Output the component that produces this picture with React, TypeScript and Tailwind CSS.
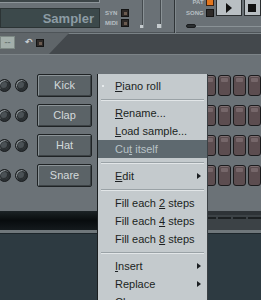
import React from "react";

const channels = ["Kick", "Clap", "Hat", "Snare"];

function Knob() {
  return (
    <div className="w-[13px] h-[13px] rounded-full bg-[#2b3033] border border-[#1a1d1f] shadow-[inset_1px_1px_0_#8a9195] flex items-center justify-center">
      <div className="w-[7px] h-[7px] rounded-full bg-[#4a5155] shadow-[inset_-1px_-1px_0_#2a2e30]" />
    </div>
  );
}

function Step() {
  return (
    <div className="w-[13px] h-[21px] rounded-[3px] bg-[#5c4d50] border border-[#1b1b1d] flex justify-center pt-[2px] shadow-[inset_0_1px_0_#7d6d70]">
      <div className="w-[7px] h-[4px] rounded-[1px] bg-[#76676a]" />
    </div>
  );
}

function Item({
  children,
  active,
  sub,
}: {
  children: React.ReactNode;
  active?: boolean;
  sub?: boolean;
}) {
  return (
    <div
      className={
        "h-[18px] flex items-center pl-[17px] pr-[6px] " +
        (active ? "bg-[#5e696f] text-[#b9c3c7]" : "text-[#1b1f22]")
      }
    >
      <span className="flex-1">{children}</span>
      {sub && (
        <span className="w-0 h-0 border-y-[3.5px] border-y-transparent border-l-[4px] border-l-[#1b1f22]" />
      )}
    </div>
  );
}

function Sep() {
  return (
    <div className="h-[9px] flex items-center px-[3px]">
      <div className="flex-1 h-[2px] border-t border-[#9aa2a6] border-b border-b-[#e2e6e8]" />
    </div>
  );
}

export default function App() {
  return (
    <div className="relative w-[261px] h-[300px] overflow-hidden bg-[#6b7277] font-['Liberation_Sans',sans-serif] flex flex-col">
      {/* TOP PANEL */}
      <div className="h-[33px] flex bg-[#6a7176] border-b border-[#4e5458]">
        <div className="w-[100px] flex flex-col">
          <div className="h-[3px] bg-[#3c4547] border-b border-r border-[#8d9599]" />
          <div className="mt-[5px] h-[20px] bg-[#3c494b] border border-[#2c3435] flex items-center justify-end pr-[5px] text-[#8c9ca4] font-bold text-[13px] leading-none">
            Sampler
          </div>
        </div>
        <div className="ml-[5px] pt-[9px] flex flex-col gap-[2px] text-[6px] font-bold text-[#b7bfc3] leading-none">
          <div className="flex items-center gap-[4px]">
            <span className="w-[12px]">SYN</span>
            <div className="w-[8px] h-[8px] bg-[#2e2a28] border border-[#141414] flex items-center justify-center">
              <div className="w-[3px] h-[3px] bg-[#6b5b50]" />
            </div>
          </div>
          <div className="flex items-center gap-[4px]">
            <span className="w-[12px]">MIDI</span>
            <div className="w-[8px] h-[8px] bg-[#2e2a28] border border-[#141414] flex items-center justify-center">
              <div className="w-[3px] h-[3px] bg-[#6b5b50]" />
            </div>
          </div>
        </div>
        <div className="ml-[13px] w-[2px] h-[28px] bg-[#454b4f] border-r border-[#8a9296] flex items-end">
          <div className="w-[4px] h-[3px] -ml-[2px] bg-[#c5cbce]" />
        </div>
        <div className="ml-[16px] w-[2px] h-[28px] bg-[#454b4f] border-r border-[#8a9296] flex items-end">
          <div className="w-[7px] h-[4px] -ml-[3px] bg-[#c5cbce]" />
        </div>
        <div className="ml-[12px] w-[2px] h-[33px] bg-[#2f3437] border-r border-[#80888c]" />
        <div className="flex-1 flex flex-col pl-[10px]">
          <div className="flex items-start">
            <div className="flex flex-col gap-[3px] text-[6px] font-bold text-[#b7bfc3] leading-none">
              <div className="flex items-center justify-end gap-[2px] -mt-[2px]">
                <span>PAT</span>
                <div className="w-[8px] h-[8px] bg-[#e2761e] border border-[#3a2010]" />
              </div>
              <div className="flex items-center gap-[2px]">
                <span>SONG</span>
                <div className="w-[8px] h-[8px] bg-[#2e2a28] border border-[#141414]" />
              </div>
            </div>
            <div className="ml-[2px] -mt-[1px] w-[26px] h-[17px] bg-[#b9bfc3] border border-[#2a2e30] flex items-center justify-center">
              <div className="w-0 h-0 border-y-[5px] border-y-transparent border-l-[6px] border-l-[#111]" />
            </div>
            <div className="ml-[2px] -mt-[1px] flex-1 h-[17px] bg-[#b9bfc3] border border-[#2a2e30] flex items-center pl-[3px]">
              <div className="w-[8px] h-[8px] bg-[#111]" />
            </div>
          </div>
          <div className="mt-[7px] flex items-center">
            <div className="w-[10px] h-[4px] rounded-[2px] bg-[#2a2e30] border border-[#1a1c1e]" />
            <div className="flex-1 h-[1px] bg-[#3d4246] border-b border-[#8a9296]" />
          </div>
        </div>
      </div>

      {/* TAB BAR */}
      <div className="h-[22px] flex bg-[#5f6569] border-b border-[#7c8387]">
        <div className="mt-[3px] w-[15px] h-[13px] bg-[#a3afab] border border-[#7d8985] flex items-center justify-center text-[#6c7a76] text-[9px] font-bold leading-none">
          --
        </div>
        <div className="ml-[10px] mt-[5px] text-[#c5ccd0] text-[9px] font-bold leading-none">↶</div>
        <div className="ml-[3px] mt-[6px] w-[8px] h-[8px] bg-[#2e2a28] border border-[#141414] flex items-center justify-center">
          <div className="w-[3px] h-[3px] bg-[#6b5b50]" />
        </div>
        <div className="ml-[5px] flex-1 bg-[#43484c] border-t border-[#7a8286] [clip-path:polygon(20px_0,100%_0,100%_100%,0_100%)]" />
      </div>

      {/* CHANNEL RACK */}
      <div className="h-[156px] pt-[19px] flex flex-col gap-[7px]">
        {channels.map((c) => (
          <div key={c} className="h-[23px] flex items-center">
            <div className="-ml-[2px] flex gap-[4px]">
              <Knob />
              <Knob />
            </div>
            <div className="ml-[9px] w-[60px] h-[23px] rounded-[2px] bg-[#5b6367] border border-[#1f2325] shadow-[inset_1px_1px_0_#8b9397,inset_-1px_-1px_0_#3d4346] flex items-center justify-center text-[#d3d9db] text-[11px]">
              {c}
            </div>
            <div className="ml-[111px] flex gap-[2px]">
              <Step />
              <Step />
              <Step />
              <Step />
            </div>
          </div>
        ))}
      </div>

      {/* PLAYLIST STRIP */}
      <div className="h-[19px] flex">
        <div className="w-[208px] bg-gradient-to-b from-[#1c2326] via-[#080c0e] to-[#141a1d]" />
        <div className="flex-1 bg-[#3c4246] border-t-[4px] border-[#2e3337] pt-[2px] flex gap-[2px]">
          <div className="w-[13px] h-[2px] bg-[#1c2022]" />
          <div className="w-[13px] h-[2px] bg-[#1c2022]" />
          <div className="w-[13px] h-[2px] bg-[#1c2022]" />
          <div className="w-[13px] h-[2px] bg-[#1c2022]" />
        </div>
      </div>
      <div className="h-[3px] bg-[#6f777b]" />
      <div className="flex-1 bg-[#2d3a41] border-t border-[#1d262b]" />

      {/* CONTEXT MENU */}
      <div className="absolute left-[97px] top-[74px] w-[111px] h-[240px] bg-[#c4cacd] border-l border-[#1a1e20] border-r border-r-[#3a4044] pt-[3px] text-[11px] leading-none">
        <div className="relative">
          <div className="absolute left-[4px] top-[8px] w-[2px] h-[2px] bg-[#e6eaec]" />
          <Item>
            <u>P</u>iano roll
          </Item>
        </div>
        <Sep />
        <Item>
          <u>R</u>ename...
        </Item>
        <Item>
          <u>L</u>oad sample...
        </Item>
        <Item active>
          Cu<u>t</u> itself
        </Item>
        <Sep />
        <Item sub>
          <u>E</u>dit
        </Item>
        <Sep />
        <Item>
          Fill each <u>2</u> steps
        </Item>
        <Item>
          Fill each <u>4</u> steps
        </Item>
        <Item>
          Fill each <u>8</u> steps
        </Item>
        <Sep />
        <Item sub>
          <u>I</u>nsert
        </Item>
        <Item sub>Replace</Item>
        <Item>
          <u>C</u>lone
        </Item>
      </div>
    </div>
  );
}
